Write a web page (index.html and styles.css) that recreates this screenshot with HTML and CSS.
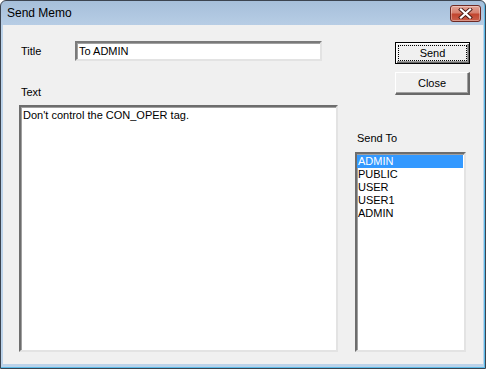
FILE: index.html
```html
<!DOCTYPE html>
<html>
<head>
<meta charset="utf-8">
<link rel="stylesheet" href="styles.css">
</head>
<body>
<div class="window">
  <div class="titlebar">
    <span class="title">Send Memo</span>
    <div class="close-x">
      <svg width="17" height="11" viewBox="0 0 17 11">
        <path d="M4 1.5 L13 9.5 M13 1.5 L4 9.5" stroke="#4a1a14" stroke-width="4" stroke-linecap="square" fill="none"/>
        <path d="M4 1.5 L13 9.5 M13 1.5 L4 9.5" stroke="#ffffff" stroke-width="2.2" stroke-linecap="square" fill="none"/>
      </svg>
    </div>
  </div>
  <div class="client">
    <div class="left">
      <div class="title-row">
        <span class="lbl">Title</span>
        <div class="field">To ADMIN</div>
      </div>
      <div class="lbl text-lbl">Text</div>
      <div class="memo">Don't control the CON_OPER tag.</div>
    </div>
    <div class="right">
      <div class="btn default">Send</div>
      <div class="btn">Close</div>
      <div class="lbl sendto-lbl">Send To</div>
      <div class="listbox">
        <div class="item sel">ADMIN</div>
        <div class="item">PUBLIC</div>
        <div class="item">USER</div>
        <div class="item">USER1</div>
        <div class="item">ADMIN</div>
      </div>
    </div>
  </div>
</div>
</body>
</html>
```
FILE: styles.css
```css
html, body {
  margin: 0;
  padding: 0;
  background: #ffffff;
}
.window {
  width: 486px;
  height: 369px;
  box-sizing: border-box;
  border: 1px solid #3c4450;
  border-radius: 6px 6px 0 0;
  background: linear-gradient(#a6bfda 0px, #b7cde5 24px, #bcd3ea 24px);
  display: flex;
  flex-direction: column;
  font-family: "Liberation Sans", Arial, sans-serif;
  overflow: hidden;
  box-shadow: inset -1px -1px 0 #5bbbe8;
}
.titlebar {
  height: 24px;
  flex: none;
  display: flex;
  align-items: flex-start;
  justify-content: space-between;
  padding: 0 4px 0 6px;
}
.title {
  font-size: 12px;
  color: #000;
  line-height: 12px;
  margin-top: 6px;
}
.close-x {
  width: 29px;
  height: 15px;
  margin-top: 4px;
  border: 1px solid #6e2a24;
  border-radius: 3px;
  background: linear-gradient(#e3a395 0%, #d6806f 45%, #c2452f 55%, #c9604c 100%);
  box-shadow: inset 0 0 0 1px rgba(255,255,255,0.35);
  display: flex;
  align-items: center;
  justify-content: center;
}
.client {
  flex: 1;
  margin: 0 2px 4px 2px;
  background: #f0f0f0;
  display: flex;
  padding: 16px 0 12px 16px;
  box-sizing: border-box;
  font-size: 11px;
  color: #000;
}
.lbl {
  font-size: 11px;
  line-height: 13px;
}
.left {
  width: 319px;
  display: flex;
  flex-direction: column;
}
.title-row {
  display: flex;
  align-items: center;
  height: 20px;
}
.title-row .lbl {
  width: 54px;
  padding-left: 2px;
}
.field {
  width: 247px;
  height: 20px;
  box-sizing: border-box;
  background: #fff;
  border: 2px solid;
  border-color: #7a7a7a #e3e3e3 #e3e3e3 #7a7a7a;
  box-shadow: inset 1px 1px 0 #a0a0a0;
  padding: 2px 0 0 2px;
  line-height: 13px;
}
.text-lbl {
  margin-top: 25px;
  padding-left: 2px;
}
.memo {
  margin-top: 6px;
  flex: 1;
  background: #fff;
  border: 2px solid;
  border-color: #6d6d6d #e3e3e3 #e3e3e3 #6d6d6d;
  box-shadow: inset 1px 1px 0 #a0a0a0;
  padding: 2px 0 0 2px;
  line-height: 13px;
}
.right {
  width: 115px;
  margin-left: 17px;
  display: flex;
  flex-direction: column;
}
.btn {
  margin-left: 40px;
  width: 75px;
  height: 23px;
  box-sizing: border-box;
  background: #f0f0f0;
  display: flex;
  align-items: center;
  justify-content: center;
  font-size: 11px;
  border-style: solid;
  border-width: 1px 2px 2px 1px;
  border-color: #ffffff #696969 #696969 #ffffff;
  box-shadow: inset -1px -1px 0 #a0a0a0;
  margin-top: 8px;
}
.btn.default {
  margin-top: 1px;
  height: 22px;
  border: 1px solid #000;
  box-shadow: inset 1px 1px 0 #ffffff, inset -1px -1px 0 #696969, inset -2px -2px 0 #a0a0a0;
  outline: 1px dotted #000;
  outline-offset: -4px;
}
.sendto-lbl {
  margin-top: 37px;
  padding-left: 2px;
}
.listbox {
  margin-top: 7px;
  width: 111px;
  flex: 1;
  box-sizing: border-box;
  background: #fff;
  border: 2px solid;
  border-color: #6d6d6d #e3e3e3 #e3e3e3 #6d6d6d;
  box-shadow: inset 1px 1px 0 #a0a0a0;
  padding: 1px 0 0 0;
}
.item {
  line-height: 13px;
  height: 13px;
  padding-left: 1px;
  margin-right: 1px;
}
.item.sel {
  background: #3399ff;
  color: #fff;
}
```
